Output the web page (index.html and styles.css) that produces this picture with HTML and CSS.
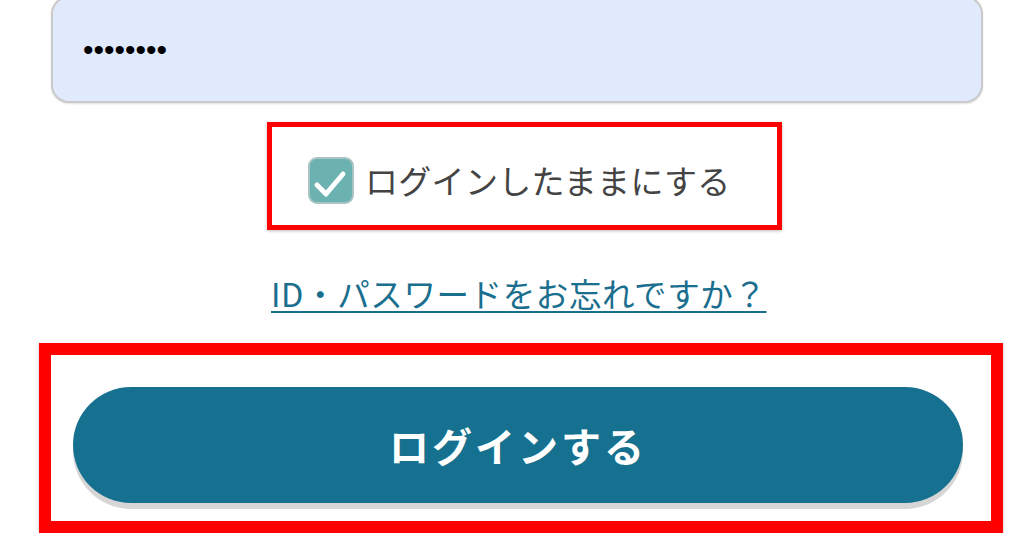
FILE: index.html
```html
<!DOCTYPE html>
<html lang="ja">
<head>
  <meta charset="UTF-8">
  <meta name="viewport" content="width=device-width, initial-scale=1.0">
  <title>ログイン</title>
  <link rel="stylesheet" href="styles.css">
</head>
<body>

  <form class="login" id="login-form">
    <!-- password field (top is cut off in the capture) -->
    <input class="pw-field" type="password" id="password" value="password" readonly>

    <!-- keep me logged in -->
    <div class="mark mark-keep">
      <label class="keep">
        <span class="check">
          <svg width="46" height="47" viewBox="0 0 46 47">
            <path d="M9 28 L18 37 L35 17" fill="none" stroke="#ffffff" stroke-width="5" stroke-linecap="round" stroke-linejoin="round"/>
          </svg>
        </span>
        <span class="keep-text">ログインしたままにする</span>
      </label>
    </div>

    <a class="forgot" href="#">ID・パスワードをお忘れですか？</a>

    <div class="mark mark-submit">
      <button type="submit" class="submit">ログインする</button>
    </div>
  </form>

</body>
</html>
```

FILE: styles.css
```css
body {
  margin: 0;
  padding: 0;
  background: #ffffff;
  font-family: "Noto Sans CJK JP", "Noto Sans", sans-serif;
  overflow: hidden;
}
.login {
  display: flex;
  flex-direction: column;
  width: 1024px;
}
.pw-field {
  box-sizing: border-box;
  margin: -4px 41px 0 51px;
  height: 107px;
  padding: 0 30px;
  border: 2px solid #cacaca;
  border-radius: 18px;
  background: #e0eafc;
  box-shadow: 0 1px 2px rgba(0, 0, 0, 0.12);
  font-family: "Liberation Sans", sans-serif;
  font-size: 30px;
  color: #000000;
  outline: none;
}
.mark {
  box-sizing: border-box;
  border-style: solid;
  border-color: #ff0000;
  box-shadow: 0 1px 3px rgba(0, 0, 0, 0.25);
}
.mark-keep {
  margin: 19px 0 0 267px;
  width: 515px;
  height: 108px;
  border-width: 5px;
  padding: 29px 0 0 36px;
}
.keep {
  display: flex;
  align-items: center;
  gap: 11px;
  cursor: pointer;
}
.check {
  box-sizing: border-box;
  position: relative;
  width: 46px;
  height: 47px;
  border: 2px solid #a9c4c3;
  border-radius: 9px;
  background: #6cb2b0;
}
.check svg {
  position: absolute;
  left: -2px;
  top: -2px;
}
.keep-text {
  font-size: 33px;
  letter-spacing: 0.3px;
  color: #444444;
  line-height: 48px;
}
.forgot {
  align-self: flex-start;
  margin: 43px 0 0 271px;
  font-size: 32.5px;
  letter-spacing: 0.6px;
  line-height: 40px;
  color: #1a6e8e;
  text-decoration: underline;
  text-decoration-thickness: 2px;
  text-underline-offset: 4px;
}
.mark-submit {
  margin: 30px 0 0 39px;
  width: 964px;
  height: 190px;
  border-width: 12px;
  padding: 32px 28px 0 22px;
}
.submit {
  width: 890px;
  height: 116px;
  border: none;
  border-radius: 58px;
  background: #16708f;
  box-shadow: 0 6px 0 #d6d6d6;
  color: #ffffff;
  font-family: "Noto Sans CJK JP", sans-serif;
  font-size: 40px;
  font-weight: bold;
  letter-spacing: 3px;
  cursor: pointer;
}
```
